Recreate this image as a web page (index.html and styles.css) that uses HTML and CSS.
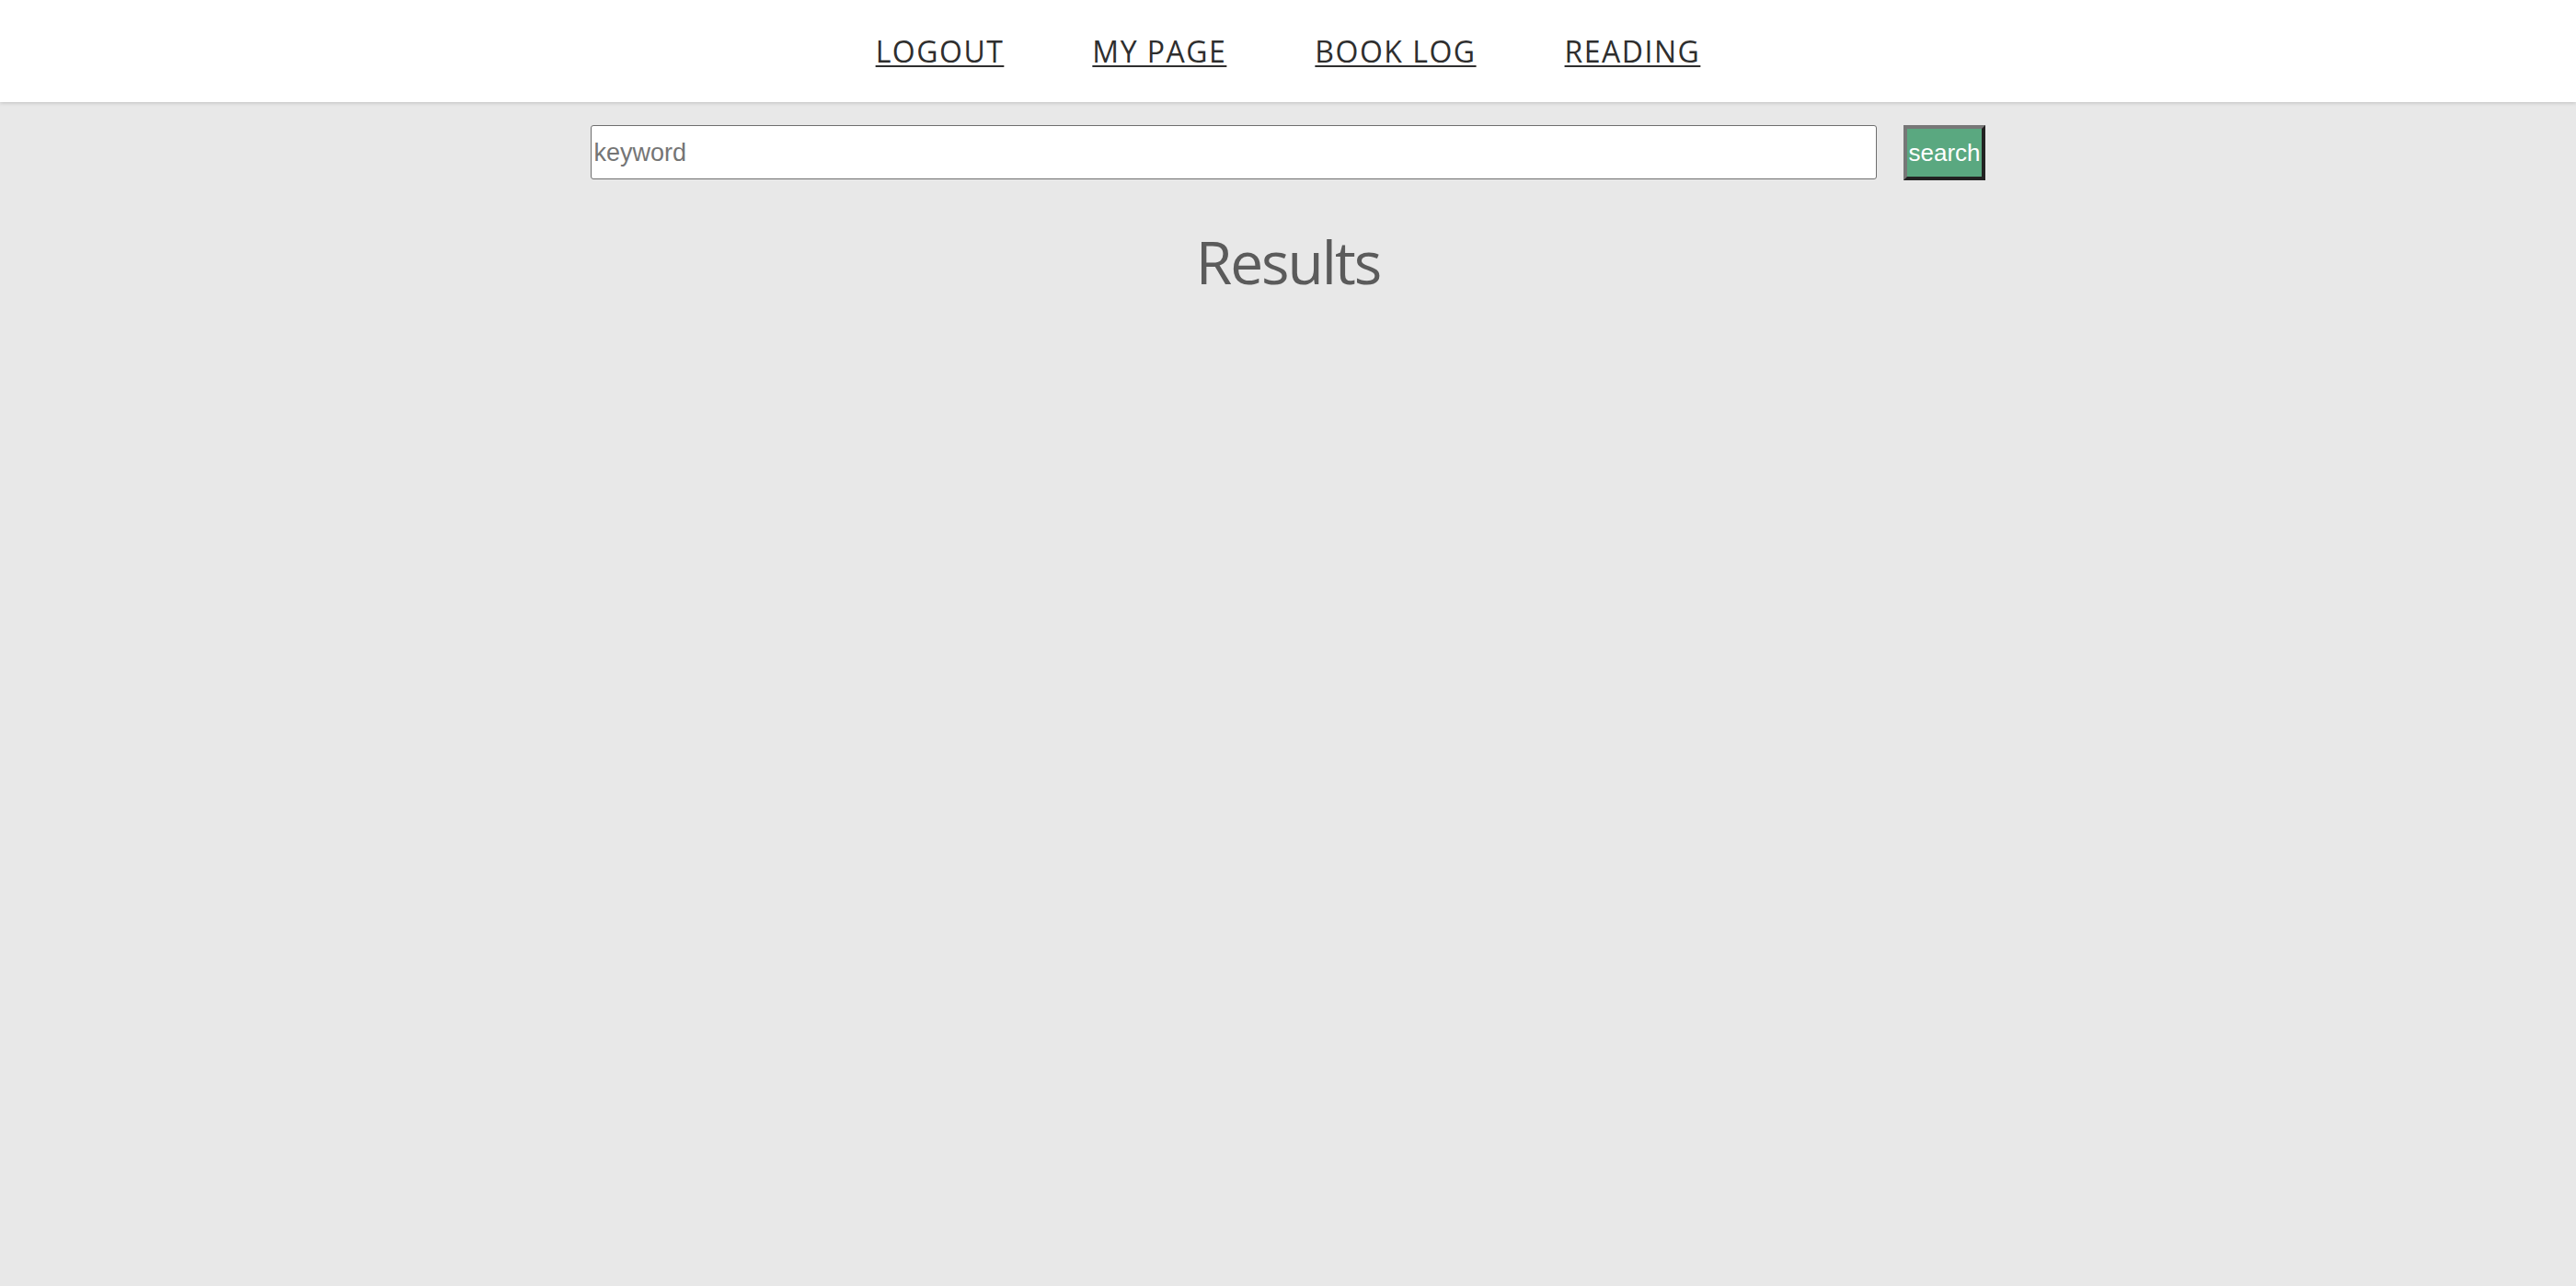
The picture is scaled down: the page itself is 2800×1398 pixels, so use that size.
FILE: index.html
```html
<!DOCTYPE html>
<html lang="en">
<head>
<meta charset="utf-8">
<title>Search</title>
<link rel="stylesheet" href="styles.css">
</head>
<body>
<header class="topbar">
  <nav class="nav">
    <a class="nav-link" href="#">LOGOUT</a>
    <a class="nav-link" href="#">MY PAGE</a>
    <a class="nav-link" href="#">BOOK LOG</a>
    <a class="nav-link" href="#">READING</a>
  </nav>
</header>
<main class="main">
  <form class="search-form">
    <input class="search-input" type="text" placeholder="keyword">
    <button class="search-button" type="button">search</button>
  </form>
  <h2 class="results-title">Results</h2>
</main>
</body>
</html>
```
FILE: styles.css
```css
html, body {
  margin: 0;
  padding: 0;
}
body {
  background: #e8e8e8;
  font-family: "Open Sans", "Liberation Sans", sans-serif;
  min-height: 100vh;
}
.topbar {
  height: 111px;
  background: #ffffff;
  box-shadow: 0 1px 4px rgba(0, 0, 0, 0.18);
  display: flex;
  align-items: center;
  justify-content: center;
  position: relative;
}
.nav {
  display: flex;
  gap: 96px;
}
.nav-link {
  font-family: "Open Sans", sans-serif;
  font-size: 32px;
  letter-spacing: 1.5px;
  color: #2e2e2e;
  text-decoration: underline;
  text-underline-offset: 3px;
  text-decoration-thickness: 2px;
}
.main {
  padding-top: 25px;
  display: flex;
  flex-direction: column;
  align-items: center;
}
.search-form {
  display: flex;
  justify-content: center;
  align-items: flex-start;
  gap: 29px;
  width: 100%;
}
.search-input {
  box-sizing: border-box;
  width: 1398px;
  height: 59px;
  margin: 0;
  padding: 2px 2px 0;
  border: 1px solid #6e6e6e;
  border-radius: 3px;
  background: #ffffff;
  font-family: "Liberation Sans", Arial, sans-serif;
  font-size: 27px;
  color: #333;
}
.search-input::placeholder {
  color: #757575;
}
.search-button {
  box-sizing: border-box;
  height: 60px;
  margin: 0;
  padding: 0 1px;
  background: #5aa880;
  border-style: solid;
  border-width: 4px;
  border-color: #777777 #222222 #222222 #777777;
  color: #ffffff;
  font-family: "Liberation Sans", Arial, sans-serif;
  font-size: 26px;
}
.results-title {
  margin: 45px 0 0;
  font-family: "Open Sans", sans-serif;
  font-weight: 500;
  font-size: 64px;
  letter-spacing: -2px;
  color: #5b5b5b;
}
```
